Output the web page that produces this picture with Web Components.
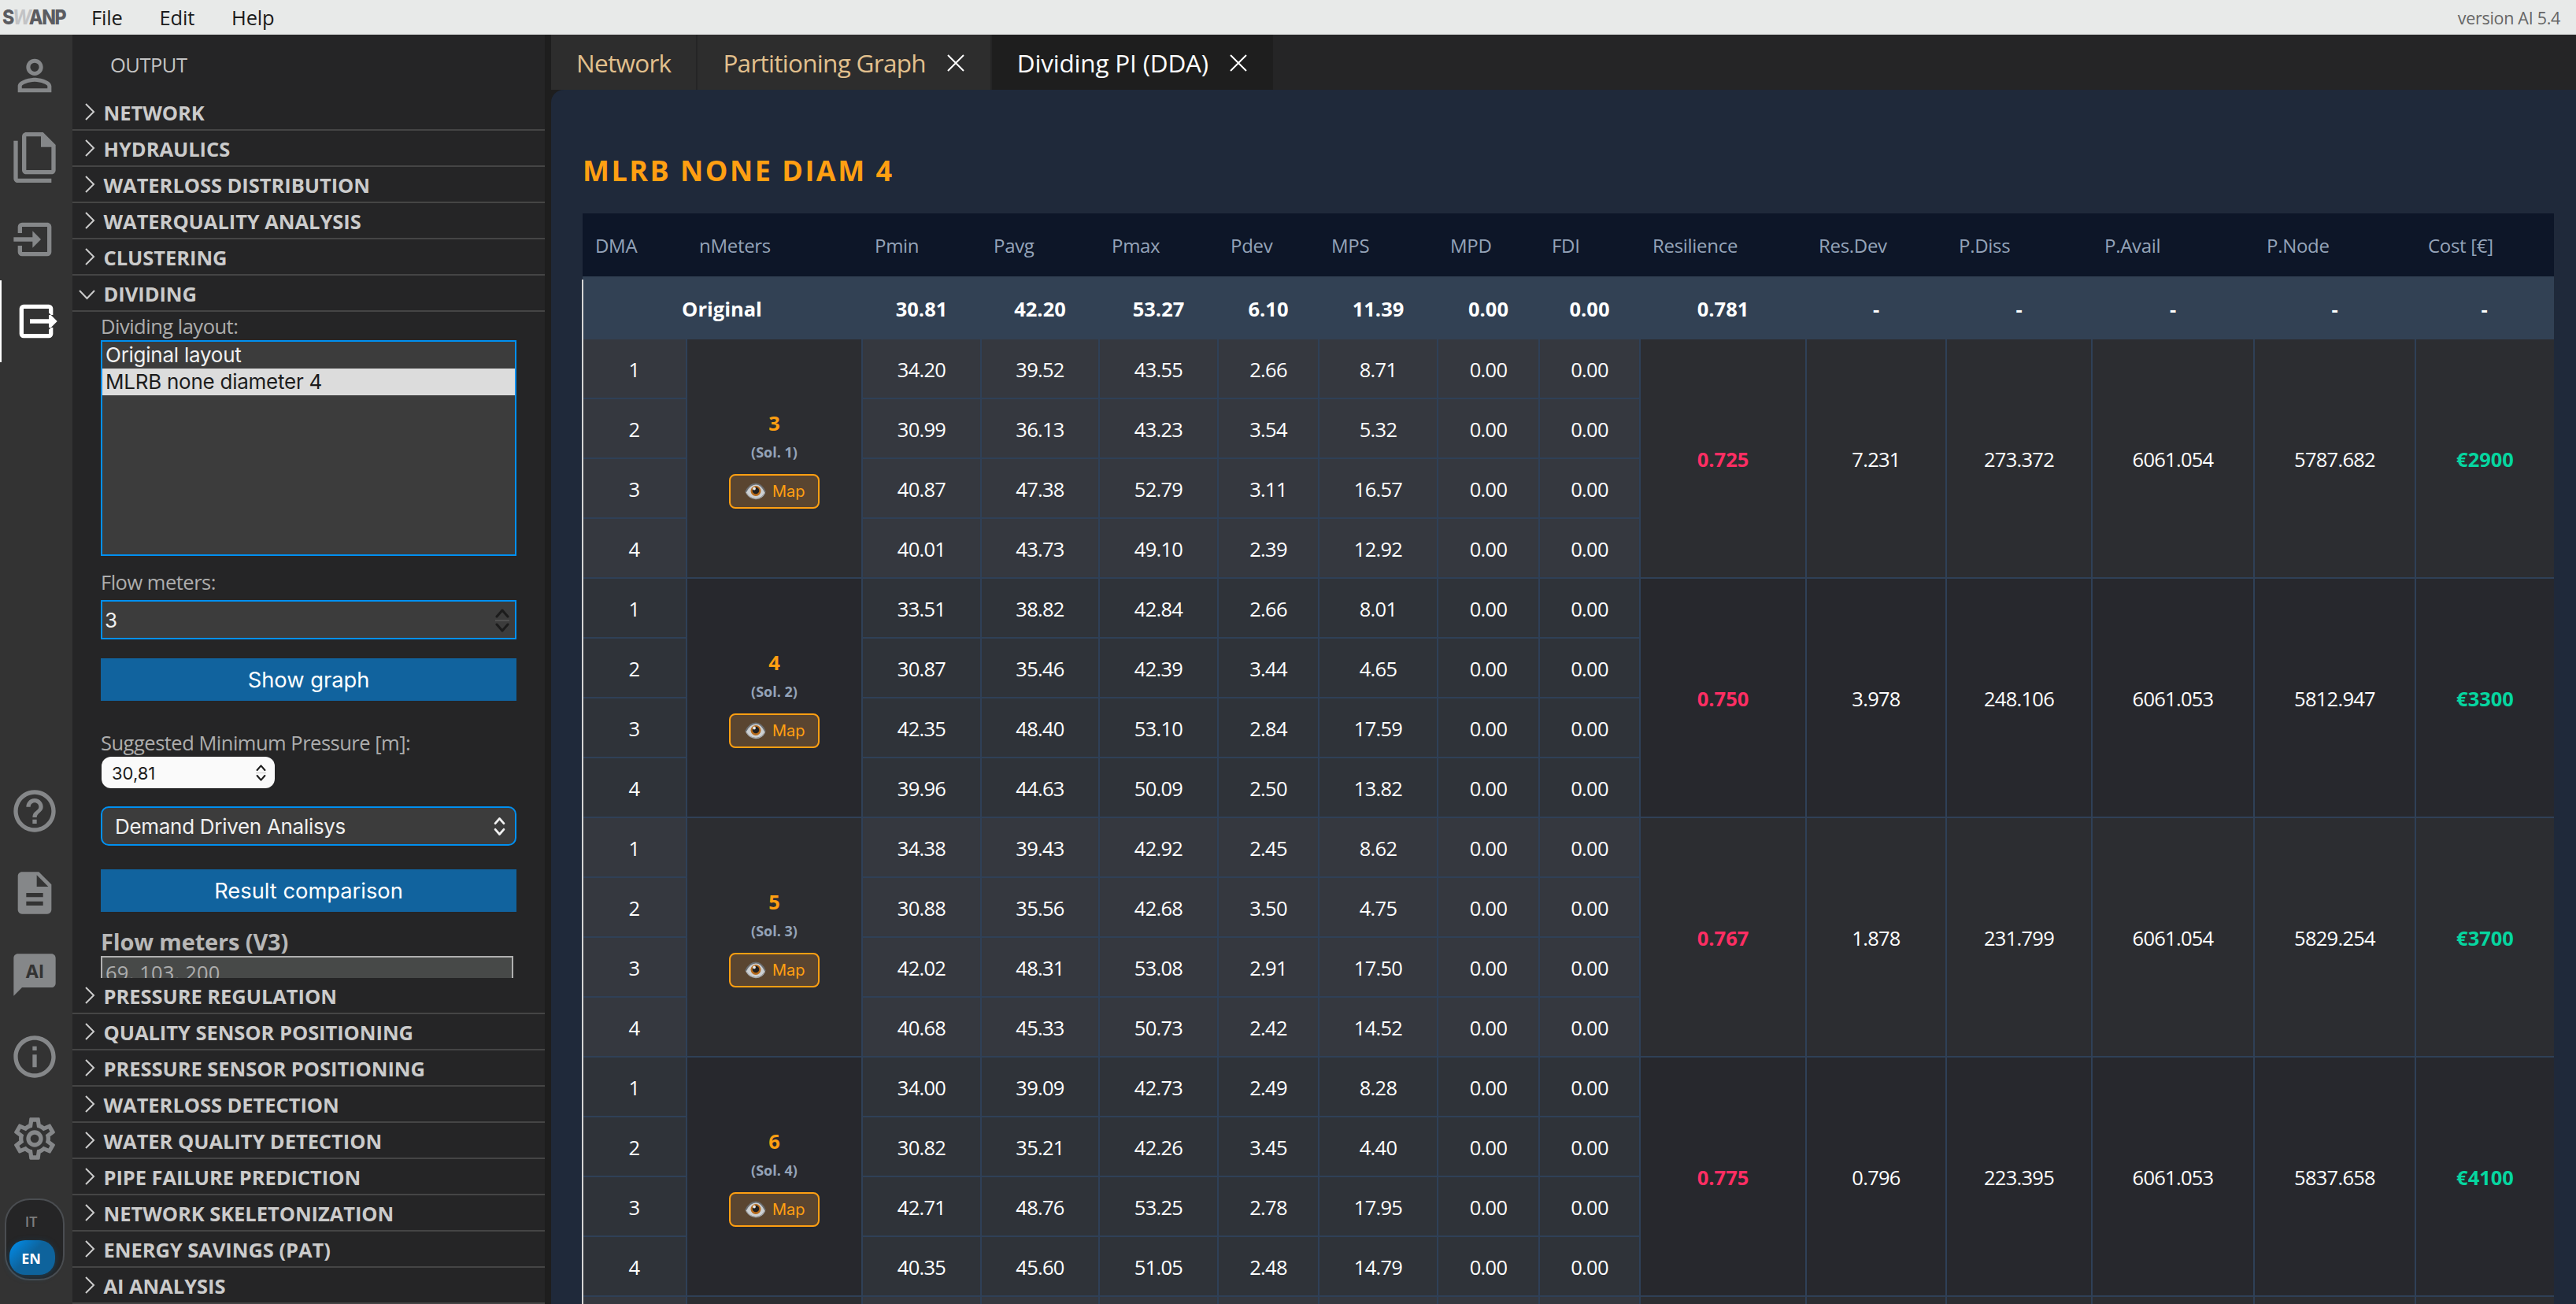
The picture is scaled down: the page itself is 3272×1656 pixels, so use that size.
<!DOCTYPE html>
<html lang="en">
<head>
<meta charset="utf-8">
<title>SWANP</title>
<style>
html, body {
   margin: 0;
   height: 100%;
   overflow: hidden;
   background: #1e1e1e;
}
body {
   font-family: "Open Sans", "Noto Sans", sans-serif;
   font-size: 25.5px;
   --ui: Inter, "Liberation Sans", sans-serif;
   --focus: #0090f1;
   --accent: #ff9f12;
}
</style>
</head>
<body>
<swanp-app></swanp-app>

<script>
function define(name, html, extra) {
   const template = document.createElement('template');
   template.innerHTML = html;
   customElements.define(name, class extends HTMLElement {
      constructor() {
         super();
         this.attachShadow({ mode: 'open' }).appendChild(template.content.cloneNode(true));
      }
      connectedCallback() {
         if(extra) extra.call(this, this.shadowRoot);
      }
   });
}

const icons = {
   user: 'M12 5.9a2.1 2.1 0 1 1 0 4.2 2.1 2.1 0 0 1 0-4.2m0 9c2.97 0 6.1 1.46 6.1 2.1v1.1H5.9V17c0-.64 3.13-2.1 6.1-2.1M12 4C9.79 4 8 5.79 8 8s1.79 4 4 4 4-1.79 4-4-1.79-4-4-4zm0 9c-2.67 0-8 1.34-8 4v3h16v-3c0-2.66-5.33-4-8-4z',
   files: 'M16 0H8C6.9 0 6 .9 6 2v16c0 1.1.9 2 2 2h12c1.1 0 2-.9 2-2V6l-6-6m4 18H8V2h7v5h5v11M4 4v18h16v2H4c-1.1 0-2-.9-2-2V4h2z',
   input: 'M15 12l-4-4v3H2v2h9v3M20 18V6c0-1.1-.9-2-2-2H6a2 2 0 0 0-2 2v3h2V6h12v12H6v-3H4v3a2 2 0 0 0 2 2h12a2 2 0 0 0 2-2z',
   output: 'M4 6a2 2 0 0 1 2-2h12a2 2 0 0 1 2 2v3h-2V6H6v12h12v-3h2v3a2 2 0 0 1-2 2H6a2 2 0 0 1-2-2zM22 12l-4-4v3H9v2h9v3z',
   help: 'M11 18h2v-2h-2v2zm1-16C6.48 2 2 6.48 2 12s4.48 10 10 10 10-4.48 10-10S17.52 2 12 2zm0 18c-4.41 0-8-3.59-8-8s3.59-8 8-8 8 3.59 8 8-3.59 8-8 8zm0-14c-2.21 0-4 1.79-4 4h2c0-1.1.9-2 2-2s2 .9 2 2c0 2-3 1.75-3 5h2c0-2.25 3-2.5 3-5 0-2.21-1.79-4-4-4z',
   doc: 'M14 2H6c-1.1 0-1.99.9-1.99 2L4 20c0 1.1.89 2 1.99 2H18c1.1 0 2-.9 2-2V8l-6-6zm2 16H8v-2h8v2zm0-4H8v-2h8v2zm-3-5V3.5L18.5 9H13z',
   chat: 'M20 2H4c-1.1 0-2 .9-2 2v18l4-4h14c1.1 0 2-.9 2-2V4c0-1.1-.9-2-2-2z',
   info: 'M11 7h2v2h-2zm0 4h2v6h-2zm1-9C6.48 2 2 6.48 2 12s4.48 10 10 10 10-4.48 10-10S17.52 2 12 2zm0 18c-4.41 0-8-3.59-8-8s3.59-8 8-8 8 3.59 8 8-3.59 8-8 8z',
   cog: 'M12,8A4,4 0 0,1 16,12A4,4 0 0,1 12,16A4,4 0 0,1 8,12A4,4 0 0,1 12,8M12,10A2,2 0 0,0 10,12A2,2 0 0,0 12,14A2,2 0 0,0 14,12A2,2 0 0,0 12,10M10,22C9.75,22 9.54,21.82 9.5,21.58L9.13,18.93C8.5,18.68 7.96,18.34 7.44,17.94L4.95,18.95C4.73,19.03 4.46,18.95 4.34,18.73L2.34,15.27C2.21,15.05 2.27,14.78 2.46,14.63L4.57,12.97L4.5,12L4.57,11L2.46,9.37C2.27,9.22 2.21,8.95 2.34,8.73L4.34,5.27C4.46,5.05 4.73,4.96 4.95,5.05L7.44,6.05C7.96,5.66 8.5,5.32 9.13,5.07L9.5,2.42C9.54,2.18 9.75,2 10,2H14C14.25,2 14.46,2.18 14.5,2.42L14.87,5.07C15.5,5.32 16.04,5.66 16.56,6.05L19.05,5.05C19.27,4.96 19.54,5.05 19.66,5.27L21.66,8.73C21.79,8.95 21.73,9.22 21.54,9.37L19.43,11L19.5,12L19.43,13L21.54,14.63C21.73,14.78 21.79,15.05 21.66,15.27L19.66,18.73C19.54,18.95 19.27,19.04 19.05,18.95L16.56,17.95C16.04,18.34 15.5,18.68 14.87,18.93L14.5,21.58C14.46,21.82 14.25,22 14,22H10M11.25,4L10.88,6.61C9.68,6.86 8.62,7.5 7.85,8.39L5.44,7.35L4.69,8.65L6.8,10.2C6.4,11.37 6.4,12.64 6.8,13.8L4.68,15.36L5.43,16.66L7.86,15.62C8.63,16.5 9.68,17.14 10.87,17.38L11.24,20H12.76L13.13,17.39C14.32,17.14 15.37,16.5 16.14,15.62L18.57,16.66L19.32,15.36L17.2,13.81C17.6,12.64 17.6,11.37 17.2,10.2L19.31,8.65L18.56,7.35L16.15,8.39C15.38,7.5 14.32,6.86 13.12,6.62L12.75,4H11.25Z'
};

define('menu-bar', `
<style>
:host {
   display: flex;
   align-items: center;
   height: 44px;
   background: #e8eae9;
   color: #1b1b1b;
   box-sizing: border-box;
   padding: 0 20px 0 3px;
}
.logo {
   font: 800 26px/44px var(--ui);
   letter-spacing: -1.6px;
   color: #5b5c61;
   width: 113px;
   transform: scaleX(0.89);
   transform-origin: 0 0;
}
.logo i { color: #c2c3c5; font-weight: 700; font-style: oblique 20deg; margin: 0 -2px 0 -1px; }
nav { display: flex; gap: 47px; flex: 1; letter-spacing: -0.2px; }
.version { font-size: 21.5px; color: #666; letter-spacing: -0.3px; }
</style>
<div class="logo">S<i>W</i>ANP</div>
<nav><span>File</span><span>Edit</span><span>Help</span></nav>
<span class="version">version AI 5.4</span>
`);

define('activity-item', `
<style>
:host {
   display: flex;
   align-items: center;
   height: 104px;
   padding-left: 12px;
   color: #858789;
   position: relative;
}
:host([active]) { color: #fff; border-left: 2px solid #fff; }
svg { width: 64px; height: 64px; fill: currentColor; }
/* label drawn over the chat bubble */
span {
   position: absolute;
   left: 12px;
   width: 64px;
   top: 34px;
   text-align: center;
   font: 700 23px/28px var(--ui);
   color: #333;
}
</style>
<svg viewBox="0 0 24 24"><path fill-rule="evenodd"/></svg>
<span><slot></slot></span>
`, function(root) {
   root.querySelector('path').setAttribute('d', icons[this.getAttribute('icon')]);
});

define('lang-switch', `
<style>
:host {
   display: flex;
   flex-direction: column;
   box-sizing: border-box;
   width: 76px;
   height: 104px;
   margin: 24px 0 30px 6px;
   padding: 5px 10px 4px 4px;
   border: 2px solid #4a4d51;
   border-radius: 32px;
   background: #252526;
   font-size: 18px;
   font-weight: 600;
   color: #7d7d7d;
   text-align: center;
}
span { height: 46px; line-height: 44px; padding-right: 3px; }
.on {
   height: 44px;
   line-height: 46px;
   border-radius: 20px;
   color: #fff;
   font-weight: 700;
   background: linear-gradient(135deg, #0090f1, #0e639c 45%);
   box-shadow: 0 2px 8px #0e639c66;
}
</style>
<span>IT</span><span class="on">EN</span>
`);

define('activity-bar', `
<style>
:host {
   display: flex;
   flex-direction: column;
   width: 92px;
   flex: none;
   background: #333;
}
.gap { flex: 1; }
</style>
<activity-item icon="user"></activity-item>
<activity-item icon="files"></activity-item>
<activity-item icon="input"></activity-item>
<activity-item icon="output" active></activity-item>
<div class="gap"></div>
<activity-item icon="help"></activity-item>
<activity-item icon="doc"></activity-item>
<activity-item icon="chat">AI</activity-item>
<activity-item icon="info"></activity-item>
<activity-item icon="cog"></activity-item>
<lang-switch></lang-switch>
`);

define('side-section', `
<style>
:host { display: block; flex: none; }
header {
   display: flex;
   align-items: center;
   box-sizing: border-box;
   height: 46px;
   padding-left: 8px;
   border-bottom: 2px solid #454545;
   font-weight: 700;
   color: #cbcbcb;
   letter-spacing: -0.05px;
}
svg { width: 22px; height: 22px; margin: 0 9.500px 0 0; fill: none; stroke: #ccc; stroke-width: 2; }
.label { padding-top: 2px; }
</style>
<header><svg viewBox="0 0 22 22"><path d="M9 1l10 10L9 21"/></svg><span class="label"></span></header>
<slot></slot>
`, function(root) {
   root.querySelector('.label').textContent = this.getAttribute('label');
   if(this.hasAttribute('open')) {
      root.querySelector('path').setAttribute('d', 'M1 8l9.500 10L20 8');
   }
});

define('num-stepper', `
<style>
:host { display: flex; color: #1c1c1c; }
svg { fill: none; stroke: currentColor; stroke-linecap: round; stroke-linejoin: round; stroke-width: 3; width: 18px; height: 30px; }
:host([small]) svg { width: 13px; height: 21px; }
line { stroke: #8884; stroke-width: 2; }
:host([plain]) line { display: none; }
:host([plain]) svg { width: 15px; height: 23px; stroke-width: 3.600; }
</style>
<svg viewBox="0 0 18 30"><path d="M2 10l7-8 7 8M2 20l7 8 7-8"/><line x1="0" y1="15" x2="18" y2="15"/></svg>
`);

define('dividing-form', `
<style>
:host {
   display: flex;
   flex-direction: column;
   align-items: flex-start;
   height: 846px;
   overflow: hidden;
   box-sizing: border-box;
   padding-left: 36px;
   color: #adadad;
}
label, .list, .field, .select, .btn, .pressure, h4, .area { flex: none; box-sizing: border-box; }
label { display: block; height: 36px; line-height: 36px; letter-spacing: -0.5px; }
label.pressure-label { margin-top: 35px; line-height: 37px; }
.list, .field, .select, .btn {
   width: 528px;
   font-family: var(--ui);
}
.list {
   height: 274px;
   border: 2px solid var(--focus);
   background: #3c3c3c;
   margin-bottom: 15px;
}
.list div { height: 34px; line-height: 34px; padding-left: 4px; color: #f0f0f0; font-size: 26px; letter-spacing: -0.25px; }
.list .sel { background: #dcdcdc; color: #1c1c1c; }
.field {
   display: flex;
   align-items: center;
   justify-content: space-between;
   height: 50px;
   margin: 5px 0 24px;
   border: 2px solid var(--focus);
   background: #3c3c3c;
   color: #f0f0f0;
   font-size: 26px;
   padding: 1px 7px 0 3px;
}
.btn {
   height: 54px;
   line-height: 55px;
   background: #11639e;
   color: #fff;
   font-size: 27.300px;
   text-align: center;
}
.pressure {
   display: flex;
   align-items: center;
   justify-content: space-between;
   width: 220px;
   height: 40px;
   margin: 0 0 23px 1px;
   padding: 1px 11px 0 13px;
   border-radius: 12px;
   background: #fafafa;
   color: #1c1c1c;
   font: 22px var(--ui);
}
.select {
   display: flex;
   align-items: center;
   justify-content: space-between;
   height: 50px;
   margin-bottom: 30px;
   padding: 0 12px 0 16px;
   border: 2px solid var(--focus);
   border-radius: 10px;
   background: #3c3c3c;
   color: #f0f0f0;
   font-size: 26px;
   letter-spacing: -0.3px;
}
.select num-stepper { color: #f0f0f0; }
h4 { margin: 20px 0 0; height: 36px; line-height: 35px; font-size: 29px; letter-spacing: -0.15px; color: #b8b8b8; }
.area {
   width: 524px;
   height: 100px;
   border: 2px solid #b0b0b0;
   background: #474948;
   padding: 0 4px;
   line-height: 39px;
   letter-spacing: 0.2px;
   white-space: pre;
}
</style>
<label>Dividing layout:</label>
<div class="list"><div>Original layout</div><div class="sel">MLRB none diameter 4</div></div>
<label>Flow meters:</label>
<div class="field">3<num-stepper></num-stepper></div>
<div class="btn">Show graph</div>
<label class="pressure-label">Suggested Minimum Pressure [m]:</label>
<div class="pressure">30,81<num-stepper small></num-stepper></div>
<div class="select">Demand Driven Analisys<num-stepper plain></num-stepper></div>
<div class="btn">Result comparison</div>
<h4>Flow meters (V3)</h4>
<div class="area">69, 103, 200</div>
`);

define('side-bar', `
<style>
:host {
   display: flex;
   flex-direction: column;
   width: 600px;
   flex: none;
   background: #252526;
}
.title { height: 76px; line-height: 76px; padding-left: 48px; color: #c4c4c4; letter-spacing: -0.5px; }
</style>
<div class="title">OUTPUT</div>
<side-section label="NETWORK"></side-section>
<side-section label="HYDRAULICS"></side-section>
<side-section label="WATERLOSS DISTRIBUTION"></side-section>
<side-section label="WATERQUALITY ANALYSIS"></side-section>
<side-section label="CLUSTERING"></side-section>
<side-section label="DIVIDING" open><dividing-form></dividing-form></side-section>
<side-section label="PRESSURE REGULATION"></side-section>
<side-section label="QUALITY SENSOR POSITIONING"></side-section>
<side-section label="PRESSURE SENSOR POSITIONING"></side-section>
<side-section label="WATERLOSS DETECTION"></side-section>
<side-section label="WATER QUALITY DETECTION"></side-section>
<side-section label="PIPE FAILURE PREDICTION"></side-section>
<side-section label="NETWORK SKELETONIZATION"></side-section>
<side-section label="ENERGY SAVINGS (PAT)"></side-section>
<side-section label="AI ANALYSIS"></side-section>
`);

define('editor-tab', `
<style>
:host {
   display: flex;
   align-items: center;
   box-sizing: border-box;
   height: 70px;
   padding: 1px 32px 0 32px;
   border-right: 2px solid #252526;
   background: #2d2d2d;
   color: #e2c08d;
   font-size: 31.500px;
   letter-spacing: -0.72px;
   white-space: nowrap;
}
:host([active]) { background: #1e1e1e; color: #fff; border-right: 0; letter-spacing: -0.2px; }
svg { display: none; width: 24px; height: 24px; margin-left: 26px; stroke: #fff; stroke-width: 2; }
:host([closable]) svg { display: block; }
</style>
<slot></slot>
<svg viewBox="0 0 24 24"><path d="M2 2l20 20M22 2L2 22"/></svg>
`);

define('map-button', `
<style>
:host {
   display: flex;
   align-items: center;
   box-sizing: border-box;
   width: 115px;
   height: 44px;
   padding: 1px 0 0 18px;
   gap: 8px;
   border: 2px solid var(--accent);
   border-radius: 8px;
   background: #5a4530;
   color: var(--accent);
   font: 20px var(--ui);
}
svg { width: 27px; height: 22px; }
</style>
<svg viewBox="0 0 27 22">
   <path d="M1 12C5 4 9 1.500 14 1.500S23 5 26 12c-3 5-7 8-12 8S4 17 1 12z" fill="#cdd0d2"/>
   <path d="M1 12C5 4 9 1.500 14 1.500S23 5 26 12" fill="none" stroke="#6b6e71" stroke-width="1.800"/>
   <path d="M2 13c3 5 7 7.500 12 7.500S23 18 25.500 13" fill="none" stroke="#a4a7aa" stroke-width="1.400"/>
   <circle cx="14" cy="10.500" r="6.500" fill="#b5691b"/>
   <circle cx="14" cy="10" r="4.300" fill="#22201f"/>
   <circle cx="12" cy="7.500" r="1.900" fill="#e8e8e8"/>
</svg>
<span>Map</span>
`);

const columns = [
   ['DMA', 133], ['nMeters', 223], ['Pmin', 151], ['Pavg', 150], ['Pmax', 151], ['Pdev', 128],
   ['MPS', 151], ['MPD', 129], ['FDI', 128], ['Resilience', 211], ['Res.Dev', 178],
   ['P.Diss', 185], ['P.Avail', 206], ['P.Node', 205], ['Cost [€]', 175]
];

const original = ['30.81', '42.20', '53.27', '6.10', '11.39', '0.00', '0.00', '0.781', '-', '-', '-', '-', '-'];

const solutions = [
   { meters: 3, rows: ['34.20 39.52 43.55 2.66 8.71', '30.99 36.13 43.23 3.54 5.32', '40.87 47.38 52.79 3.11 16.57', '40.01 43.73 49.10 2.39 12.92'],
     totals: ['0.725', '7.231', '273.372', '6061.054', '5787.682', '€2900'] },
   { meters: 4, rows: ['33.51 38.82 42.84 2.66 8.01', '30.87 35.46 42.39 3.44 4.65', '42.35 48.40 53.10 2.84 17.59', '39.96 44.63 50.09 2.50 13.82'],
     totals: ['0.750', '3.978', '248.106', '6061.053', '5812.947', '€3300'] },
   { meters: 5, rows: ['34.38 39.43 42.92 2.45 8.62', '30.88 35.56 42.68 3.50 4.75', '42.02 48.31 53.08 2.91 17.50', '40.68 45.33 50.73 2.42 14.52'],
     totals: ['0.767', '1.878', '231.799', '6061.054', '5829.254', '€3700'] },
   { meters: 6, rows: ['34.00 39.09 42.73 2.49 8.28', '30.82 35.21 42.26 3.45 4.40', '42.71 48.76 53.25 2.78 17.95', '40.35 45.60 51.05 2.48 14.79'],
     totals: ['0.775', '0.796', '223.395', '6061.053', '5837.658', '€4100'] }
];

define('result-table', `
<style>
:host { display: block; width: 2504px; color: #fff; }
.grid { display: grid; grid-template-columns: ${columns.map(c => c[1] + 'px').join(' ')}; }
.head { height: 80px; background: #0d1628; color: #94a3b8; font-size: 24px; letter-spacing: -0.3px; }
.head div { padding: 2px 0 0 15px; line-height: 78px; }
.head div:first-child { padding-left: 16px; }
.orig { height: 80px; background: #324154; font-weight: 700; text-align: center; line-height: 83px; }
.orig div { padding-right: 2px; height: 80px; }
.orig .name { grid-column: span 2; }
.group { grid-template-rows: repeat(4, 76px); --cell: #35383f; --span: #2c2d31; }
.group.even { --cell: #2f3339; --span: #27282d; }
.group div {
   display: flex;
   align-items: center;
   justify-content: center;
   box-sizing: border-box;
   padding: 2px 0 0;
   border: solid #2f4057;
   border-width: 0 2px 2px 0;
   background: var(--cell);
   letter-spacing: -0.75px;
}
.group div.span { grid-row: 1 / span 4; background: var(--span); padding-top: 2px; }
.group div.last { border-right-width: 0; }
.group div.m { grid-column: 2; flex-direction: column; letter-spacing: 0; padding-top: 0; }
.m b { color: var(--accent); line-height: 36px; }
.m small { color: #94a3b8; font-size: 18px; font-weight: 700; line-height: 26px; margin: 6px 0 15px; }
.group div.res { color: #ff2e63; font-weight: 700; letter-spacing: 0; }
.group div.cost { color: #06d6a0; font-weight: 700; letter-spacing: 0; }
</style>
<div class="grid head"></div>
<div class="grid orig"></div>
<div class="rows"></div>
`, function(root) {
   root.querySelector('.head').innerHTML = columns.map(c => `<div>${c[0]}</div>`).join('');
   root.querySelector('.orig').innerHTML = '<div class="name">Original</div>' + original.map(v => `<div>${v}</div>`).join('');

   let html = '';
   solutions.forEach((s, i) => {
      let cells = `<div class="span m"><b>${s.meters}</b><small>(Sol. ${i + 1})</small><map-button></map-button></div>`;
      s.totals.forEach((t, k) => {
         let cls = k === 0 ? 'res' : k === 5 ? 'cost last' : '';
         cells += `<div class="span ${cls}" style="grid-column:${10 + k}">${t}</div>`;
      });
      s.rows.forEach((r, n) => {
         [n + 1, ...r.split(' '), '0.00', '0.00'].forEach((v, k) => {
            cells += `<div style="grid-area:${n + 1}/${k ? k + 2 : 1}">${v}</div>`;
         });
      });
      html += `<div class="grid group ${i % 2 ? 'even' : ''}">${cells}</div>`;
   });
   // top of the next solution, cut by the bottom of the window
   let next = columns.map((c, k) => {
      let span = k === 1 || k > 8;
      return `<div class="${span ? 'span' : ''} ${k === 14 ? 'last' : ''}" style="${span ? `grid-column:${k + 1}` : `grid-area:1/${k + 1}`}"></div>`;
   }).join('');
   root.querySelector('.rows').innerHTML = html + `<div class="grid group">${next}</div>`;
});

define('result-panel', `
<style>
:host {
   display: block;
   flex: 1;
   overflow: hidden;
   padding-left: 40px;
   border-top-left-radius: 16px;
   background: #1f293a;
   position: relative;
}
h2 {
   margin: 0;
   padding-top: 72px;
   height: 85px;
   line-height: 62px;
   font-size: 36px;
   color: var(--accent);
   letter-spacing: 2.500px;
}
/* light edge left of the table, straddles its border */
.edge {
   position: absolute;
   left: 39px;
   top: 241px;
   bottom: 0;
   width: 2px;
   background: #d4d4d4;
}
</style>
<h2>MLRB NONE DIAM 4</h2>
<result-table></result-table>
<div class="edge"></div>
`);

define('swanp-app', `
<style>
:host { display: flex; flex-direction: column; height: 100vh; }
.body { display: flex; flex: 1; min-height: 0; }
main { display: flex; flex-direction: column; flex: 1; min-width: 0; margin-left: 8px; }
.tabs { display: flex; flex: none; height: 70px; background: #252526; }
</style>
<menu-bar></menu-bar>
<div class="body">
   <activity-bar></activity-bar>
   <side-bar></side-bar>
   <main>
      <div class="tabs">
         <editor-tab>Network</editor-tab>
         <editor-tab closable>Partitioning Graph</editor-tab>
         <editor-tab closable active>Dividing PI (DDA)</editor-tab>
      </div>
      <result-panel></result-panel>
   </main>
</div>
`);
</script>
</body>
</html>
